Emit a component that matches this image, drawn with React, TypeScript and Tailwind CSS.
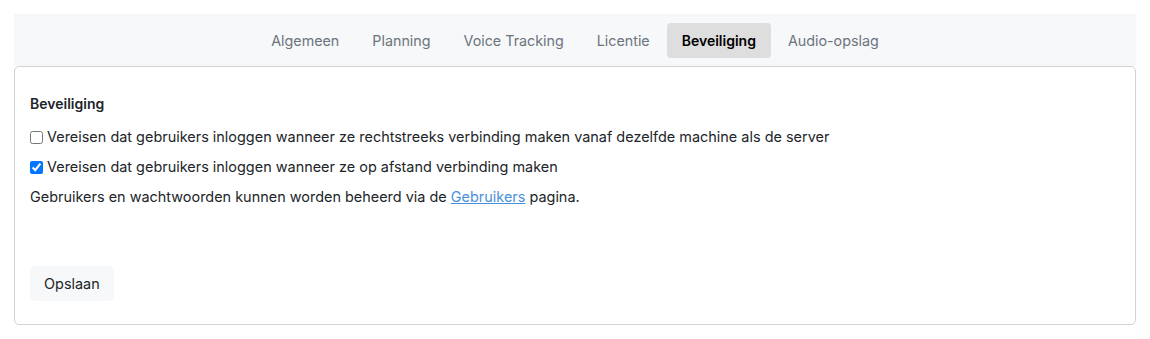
import React from "react";

const tabs = ["Algemeen", "Planning", "Voice Tracking", "Licentie", "Beveiliging", "Audio-opslag"];

export default function App() {
  return (
    <div className="min-h-[339px] bg-white px-[14px] pt-[14px] text-[14.45px] text-[#212529]" style={{ fontFamily: "Inter, 'Noto Sans', sans-serif" }}>
      <div className="flex h-[52px] items-center justify-center bg-[#f7f8fa]">
        <div className="flex items-center gap-[1px] pt-[1px]">
          {tabs.map((t) => (
            <div
              key={t}
              className={
                t === "Beveiliging"
                  ? "flex h-[35px] items-center rounded-[4px] bg-[#dedede] px-[15px] text-[14px] font-semibold text-black"
                  : "flex h-[35px] items-center px-[16px] text-[14.3px] text-[#6c757d]"
              }
            >
              {t}
            </div>
          ))}
        </div>
      </div>
      <div className="rounded-[5px] border border-[#d3d3d3] px-[15px] pb-[23px] pt-[27px]">
        <div className="h-[20px] text-[14px] font-semibold leading-[20px] text-[#212529]">Beveiliging</div>
        <label className="mt-[13px] flex h-[20px] items-center leading-[20px]">
          <input type="checkbox" className="m-0 mr-[4px] h-[13px] w-[13px]" />
          Vereisen dat gebruikers inloggen wanneer ze rechtstreeks verbinding maken vanaf dezelfde machine als de server
        </label>
        <label className="mt-[10px] flex h-[20px] items-center leading-[20px]">
          <input type="checkbox" defaultChecked className="m-0 mr-[4px] h-[13px] w-[13px]" />
          Vereisen dat gebruikers inloggen wanneer ze op afstand verbinding maken
        </label>
        <div className="mt-[10px] h-[20px] leading-[20px]">
          Gebruikers en wachtwoorden kunnen worden beheerd via de{" "}
          <a href="#" className="text-[#4a90d9] underline">Gebruikers</a> pagina.
        </div>
        <button className="mt-[59px] flex h-[35px] items-center rounded-[5px] bg-[#f7f8fa] px-[14px] text-[#212529]">
          Opslaan
        </button>
      </div>
    </div>
  );
}
